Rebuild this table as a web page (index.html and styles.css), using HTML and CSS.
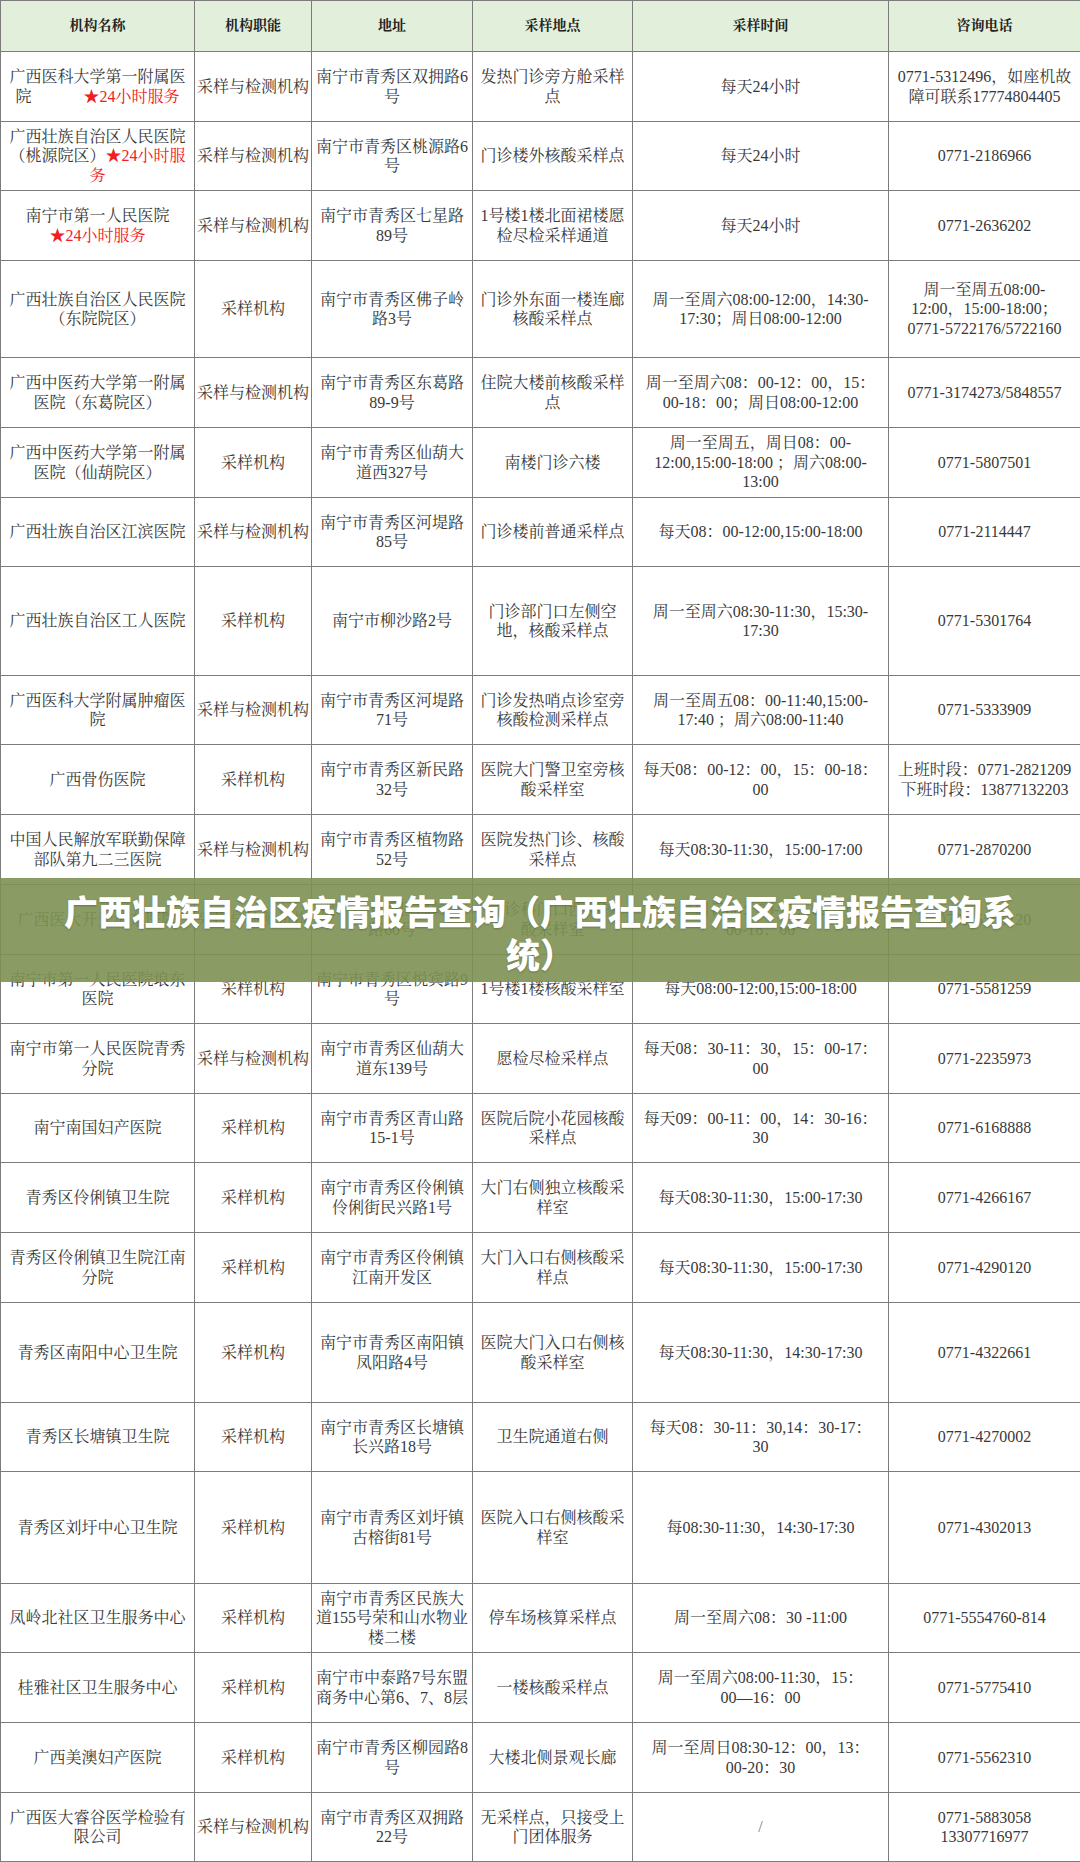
FILE: index.html
```html
<!DOCTYPE html>
<html lang="zh-CN">
<head>
<meta charset="utf-8">
<title>广西壮族自治区疫情报告查询</title>
<link rel="stylesheet" href="styles.css">
</head>
<body>
<div class="page">
<table class="sites">
<colgroup>
<col class="c1"><col class="c2"><col class="c3"><col class="c4"><col class="c5"><col class="c6">
</colgroup>
<thead>
<tr class="head"><th>机构名称</th><th>机构职能</th><th>地址</th><th>采样地点</th><th>采样时间</th><th>咨询电话</th></tr>
</thead>
<tbody>
<tr><td>广西医科大学第一附属医<br>院<span class="gap"></span><span class="red">★24小时服务</span></td><td>采样与检测机构</td><td>南宁市青秀区双拥路6<br>号</td><td>发热门诊旁方舱采样<br>点</td><td>每天24小时</td><td>0771-5312496，如座机故<br>障可联系17774804405</td></tr>
<tr class="r69"><td>广西壮族自治区人民医院<br>（桃源院区）<span class="red">★24小时服<br>务</span></td><td>采样与检测机构</td><td>南宁市青秀区桃源路6<br>号</td><td>门诊楼外核酸采样点</td><td>每天24小时</td><td>0771-2186966</td></tr>
<tr><td>南宁市第一人民医院<br><span class="red">★24小时服务</span></td><td>采样与检测机构</td><td>南宁市青秀区七星路<br>89号</td><td>1号楼1楼北面裙楼愿<br>检尽检采样通道</td><td>每天24小时</td><td>0771-2636202</td></tr>
<tr class="r97"><td>广西壮族自治区人民医院<br>（东院院区）</td><td>采样机构</td><td>南宁市青秀区佛子岭<br>路3号</td><td>门诊外东面一楼连廊<br>核酸采样点</td><td>周一至周六08:00-12:00，14:30-<br>17:30；周日08:00-12:00</td><td>周一至周五08:00-<br>12:00，15:00-18:00；<br>0771-5722176/5722160</td></tr>
<tr><td>广西中医药大学第一附属<br>医院（东葛院区）</td><td>采样与检测机构</td><td>南宁市青秀区东葛路<br>89-9号</td><td>住院大楼前核酸采样<br>点</td><td>周一至周六08：00-12：00，15：<br>00-18：00；周日08:00-12:00</td><td>0771-3174273/5848557</td></tr>
<tr><td>广西中医药大学第一附属<br>医院（仙葫院区）</td><td>采样机构</td><td>南宁市青秀区仙葫大<br>道西327号</td><td>南楼门诊六楼</td><td>周一至周五，周日08：00-<br>12:00,15:00-18:00 ；周六08:00-<br>13:00</td><td>0771-5807501</td></tr>
<tr class="r69"><td>广西壮族自治区江滨医院</td><td>采样与检测机构</td><td>南宁市青秀区河堤路<br>85号</td><td>门诊楼前普通采样点</td><td>每天08：00-12:00,15:00-18:00</td><td>0771-2114447</td></tr>
<tr class="r109"><td>广西壮族自治区工人医院</td><td>采样机构</td><td>南宁市柳沙路2号</td><td>门诊部门口左侧空<br>地，核酸采样点</td><td>周一至周六08:30-11:30，15:30-<br>17:30</td><td>0771-5301764</td></tr>
<tr class="r69"><td>广西医科大学附属肿瘤医<br>院</td><td>采样与检测机构</td><td>南宁市青秀区河堤路<br>71号</td><td>门诊发热哨点诊室旁<br>核酸检测采样点</td><td>周一至周五08：00-11:40,15:00-<br>17:40 ；周六08:00-11:40</td><td>0771-5333909</td></tr>
<tr><td>广西骨伤医院</td><td>采样机构</td><td>南宁市青秀区新民路<br>32号</td><td>医院大门警卫室旁核<br>酸采样室</td><td>每天08：00-12：00，15：00-18：<br>00</td><td>上班时段：0771-2821209<br>下班时段：13877132203</td></tr>
<tr><td>中国人民解放军联勤保障<br>部队第九二三医院</td><td>采样与检测机构</td><td>南宁市青秀区植物路<br>52号</td><td>医院发热门诊、核酸<br>采样点</td><td>每天08:30-11:30，15:00-17:00</td><td>0771-2870200</td></tr>
<tr><td>广西医大开元埌东医院</td><td>采样与检测机构</td><td>南宁市青秀区凤岭北<br>路60号</td><td>急诊科门口西侧核<br>酸采样室</td><td>周一至周日08：00-12：00，15：<br>00-18：00</td><td>0771-5556120</td></tr>
<tr class="r69"><td>南宁市第一人民医院埌东<br>医院</td><td>采样机构</td><td>南宁市青秀区悦宾路9<br>号</td><td>1号楼1楼核酸采样室</td><td>每天08:00-12:00,15:00-18:00</td><td>0771-5581259</td></tr>
<tr><td>南宁市第一人民医院青秀<br>分院</td><td>采样与检测机构</td><td>南宁市青秀区仙葫大<br>道东139号</td><td>愿检尽检采样点</td><td>每天08：30-11：30，15：00-17：<br>00</td><td>0771-2235973</td></tr>
<tr class="r69"><td>南宁南国妇产医院</td><td>采样机构</td><td>南宁市青秀区青山路<br>15-1号</td><td>医院后院小花园核酸<br>采样点</td><td>每天09：00-11：00，14：30-16：<br>30</td><td>0771-6168888</td></tr>
<tr><td>青秀区伶俐镇卫生院</td><td>采样机构</td><td>南宁市青秀区伶俐镇<br>伶俐街民兴路1号</td><td>大门右侧独立核酸采<br>样室</td><td>每天08:30-11:30，15:00-17:30</td><td>0771-4266167</td></tr>
<tr><td>青秀区伶俐镇卫生院江南<br>分院</td><td>采样机构</td><td>南宁市青秀区伶俐镇<br>江南开发区</td><td>大门入口右侧核酸采<br>样点</td><td>每天08:30-11:30，15:00-17:30</td><td>0771-4290120</td></tr>
<tr class="r100"><td>青秀区南阳中心卫生院</td><td>采样机构</td><td>南宁市青秀区南阳镇<br>凤阳路4号</td><td>医院大门入口右侧核<br>酸采样室</td><td>每天08:30-11:30，14:30-17:30</td><td>0771-4322661</td></tr>
<tr class="r69"><td>青秀区长塘镇卫生院</td><td>采样机构</td><td>南宁市青秀区长塘镇<br>长兴路18号</td><td>卫生院通道右侧</td><td>每天08：30-11：30,14：30-17：<br>30</td><td>0771-4270002</td></tr>
<tr class="r112"><td>青秀区刘圩中心卫生院</td><td>采样机构</td><td>南宁市青秀区刘圩镇<br>古榕街81号</td><td>医院入口右侧核酸采<br>样室</td><td>每08:30-11:30，14:30-17:30</td><td>0771-4302013</td></tr>
<tr class="r69"><td>凤岭北社区卫生服务中心</td><td>采样机构</td><td>南宁市青秀区民族大<br>道155号荣和山水物业<br>楼二楼</td><td>停车场核算采样点</td><td>周一至周六08：30 -11:00</td><td>0771-5554760-814</td></tr>
<tr><td>桂雅社区卫生服务中心</td><td>采样机构</td><td>南宁市中泰路7号东盟<br>商务中心第6、7、8层</td><td>一楼核酸采样点</td><td>周一至周六08:00-11:30，15：<br>00—16：00</td><td>0771-5775410</td></tr>
<tr><td>广西美澳妇产医院</td><td>采样机构</td><td>南宁市青秀区柳园路8<br>号</td><td>大楼北侧景观长廊</td><td>周一至周日08:30-12：00，13：<br>00-20：30</td><td>0771-5562310</td></tr>
<tr class="r69"><td>广西医大睿谷医学检验有<br>限公司</td><td>采样与检测机构</td><td>南宁市青秀区双拥路<br>22号</td><td>无采样点，只接受上<br>门团体服务</td><td class="slash">/</td><td>0771-5883058<br>13307716977</td></tr>
</tbody>
</table>
<div class="banner">
<h1 class="banner-title">广西壮族自治区疫情报告查询（广西壮族自治区疫情报告查询系<br>统）</h1>
</div>
</div>
</body>
</html>
```
FILE: styles.css
```css
html, body {
  margin: 0;
  padding: 0;
  background: #ffffff;
}

.page {
  position: relative;
  width: 1080px;
}

.sites {
  width: 1080px;
  border-collapse: collapse;
  table-layout: fixed;
  font-family: "Liberation Serif", "Noto Serif CJK SC", "Noto Sans CJK SC", serif;
  font-size: 16px;
  line-height: 19.5px;
  color: #383838;
}

.c1 { width: 194px; }
.c2 { width: 117px; }
.c3 { width: 161px; }
.c4 { width: 160px; }
.c5 { width: 256px; }
.c6 { width: 192px; }

.sites th,
.sites td {
  border: 1px solid #7c7c7c;
  padding: 0 2px;
  text-align: center;
  vertical-align: middle;
  white-space: nowrap;
  overflow: visible;
}

.sites th {
  background: #e2efda;
  font-size: 14px;
  font-weight: 700;
  color: #222222;
}

.sites tr { height: 70px; }
.sites tr.head { height: 51px; }
.sites tr.r69 { height: 69px; }
.sites tr.r97 { height: 97px; }
.sites tr.r100 { height: 100px; }
.sites tr.r109 { height: 109px; }
.sites tr.r112 { height: 112px; }

.red { color: #f02020; }

.gap {
  display: inline-block;
  width: 52px;
}

.slash { color: #777777; }

.banner {
  position: absolute;
  left: 0;
  top: 878px;
  width: 1080px;
  height: 104px;
  background: rgba(125, 145, 82, 0.9);
  box-sizing: border-box;
  padding: 11px 30px 0;
}

.banner-title {
  margin: 0;
  font-family: "Noto Sans CJK SC", "Noto Sans", sans-serif;
  font-size: 34px;
  font-weight: 900;
  line-height: 43px;
  color: #ffffff;
  text-align: center;
  text-shadow: 0 1px 2px rgba(0, 0, 0, 0.25);
}
```
